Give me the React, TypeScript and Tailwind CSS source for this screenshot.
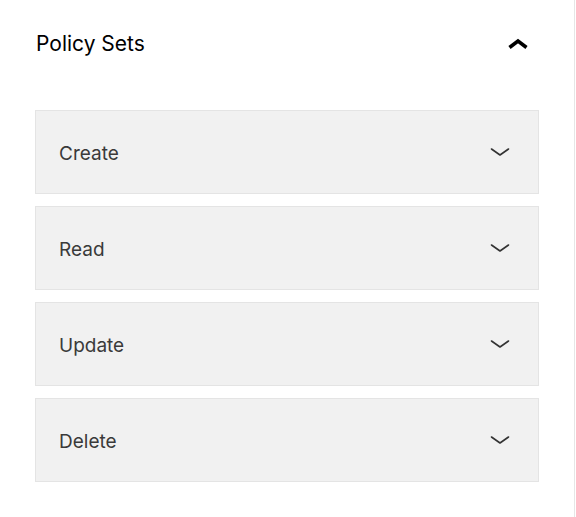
import React from 'react';

const items = ['Create', 'Read', 'Update', 'Delete'];

const ChevronDown = () => (
  <svg width="20" height="10" viewBox="0 0 20 10" fill="none">
    <path d="M1.5 2 L10 8 L18.5 2" stroke="#333" strokeWidth="1.6" strokeLinecap="round" strokeLinejoin="round" />
  </svg>
);

const ChevronUp = () => (
  <svg width="22" height="12" viewBox="0 0 22 12" fill="none">
    <path d="M2.5 9.5 L11 3 L19.5 9.5" stroke="#000" strokeWidth="3.6" strokeLinejoin="miter" />
  </svg>
);

const App: React.FC = () => {
  return (
    <div className="w-[575px] h-[517px] bg-white border-r border-[#e6e6e6] font-['Inter',sans-serif]">
      <div className="flex h-[88px] items-center justify-between pl-[36px] pr-[45px]">
        <h2 className="text-[21px] text-black">Policy Sets</h2>
        <ChevronUp />
      </div>
      <div className="mt-[22px] ml-[35px] w-[504px] flex flex-col gap-[12px]">
        {items.map((item) => (
          <div
            key={item}
            className="h-[84px] flex items-center justify-between bg-[#f1f1f1] border border-[#e4e4e4] pl-[23px] pr-[28px]"
          >
            <span className="pt-[4px] text-[19px] text-[#3a3a3a]">{item}</span>
            <ChevronDown />
          </div>
        ))}
      </div>
    </div>
  );
};

export default App;
